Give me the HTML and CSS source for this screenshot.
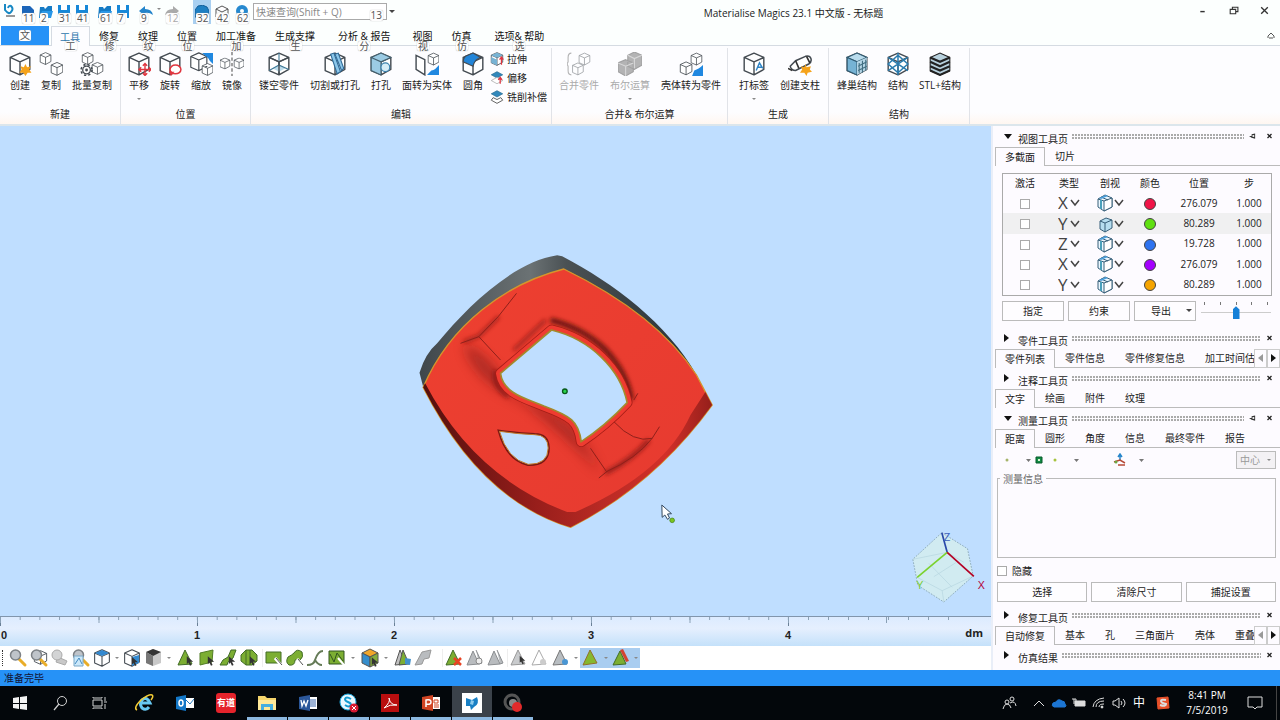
FILE: index.html
```html
<!DOCTYPE html>
<html lang="zh-CN">
<head>
<meta charset="utf-8">
<title>Materialise Magics 23.1 中文版 - 无标题</title>
<link rel="stylesheet" href="styles.css">
</head>
<body>
<svg class="defs" aria-hidden="true">
  <defs>
    <symbol id="cube" viewBox="0 0 22 22"><path d="M11 1 20 5V16L11 21 2 17V5ZM2 5l9 4 9-4M11 9v12" fill="#fff" stroke="#444b52" stroke-width="1.3" stroke-linejoin="round"/></symbol>
    <symbol id="create" viewBox="0 0 22 22"><use href="#cube"/><path d="m16 11 1.500 3 3.500-1-1.500 3 2 3-3.500 0-2 3-2-3-3.500 0 2-3-1-3 3 1z" fill="#f5a31a"/></symbol>
    <symbol id="two" viewBox="0 0 22 22"><use href="#cube" x="0" y="0" width="12" height="12"/><use href="#cube" x="10" y="9" width="13" height="13"/></symbol>
    <symbol id="batch" viewBox="0 0 22 22"><use href="#cube" x="1" y="0" width="12" height="12"/><use href="#cube" x="10" y="9" width="12" height="12"/><circle cx="6" cy="16.500" r="3.500" fill="#fff" stroke="#444b52" stroke-width="1.200"/><circle cx="6" cy="16.500" r="5" fill="none" stroke="#444b52" stroke-width="1.500" stroke-dasharray="2 2"/><circle cx="6" cy="16.500" r="1.300" fill="#444b52"/></symbol>
    <symbol id="move" viewBox="0 0 22 22"><use href="#cube"/><path d="M11 16h11M16.500 11v10M13 14l-2 2 2 2M20 14l2 2-2 2M14.500 12.500l2-2 2 2M14.500 19.500l2 2 2-2" fill="none" stroke="#e0353f" stroke-width="1.300"/></symbol>
    <symbol id="rotate" viewBox="0 0 22 22"><use href="#cube"/><ellipse cx="16" cy="16" rx="5" ry="4" fill="#fff" stroke="#e0353f" stroke-width="1.400"/><path d="m10 18 5 0-3 4z" fill="#e0353f"/></symbol>
    <symbol id="scale" viewBox="0 0 22 22"><use href="#cube" width="18" height="18"/><path d="M12 1h10v10l-3-3c-1-3-4-4-7-7z" fill="#2088e0"/><use href="#cube" x="11" y="10" width="12" height="12"/></symbol>
    <symbol id="mirror" viewBox="0 0 22 22"><use href="#cube" x="-1" y="5" width="11" height="11"/><use href="#cube" x="12" y="5" width="11" height="11"/><path d="M11 0v22" stroke="#555" stroke-dasharray="3 2"/></symbol>
    <symbol id="hollow" viewBox="0 0 22 22"><use href="#cube"/><path d="m5 15 6-3 6 3-6 3z" fill="#bcdceb"/><path d="M11 1v11l9 4M11 12l-9 5" fill="none" stroke="#3d7795"/><path d="M2 5l9 4 9-4M11 9v12" fill="none" stroke="#444b52" stroke-width="1.300"/></symbol>
    <symbol id="cut" viewBox="0 0 22 22"><use href="#cube"/><path d="m7 2 3-1 6 17-3 2z" fill="#8cc7ea" stroke="#2f6996"/><path d="m11 2 3-1 5 14-2 2z" fill="#8cc7ea" stroke="#2f6996"/></symbol>
    <symbol id="punch" viewBox="0 0 22 22"><use href="#cube"/><path d="m2 5 9-4 9 4-9 4zM2 5l9 4v12l-9-4z" fill="#9bcbe4" stroke="#44616f"/><circle cx="15" cy="14" r="4" fill="#d6edf7" stroke="#3981ad"/></symbol>
    <symbol id="face" viewBox="0 0 22 22"><path d="m1 3 8 4v14l-8-5z" fill="#fff" stroke="#444b52" stroke-width="1.300"/><use href="#cube" x="11" y="0" width="12" height="13"/><path d="M22 12v9H11l4-4c3 0 4-2 7-5z" fill="#2088e0"/></symbol>
    <symbol id="fillet" viewBox="0 0 22 22"><use href="#cube"/><path d="m4 4 7-3 7 4c-4 1-6 4-7 8l-9-4c0-3 1-4 2-5z" fill="#2385d8" stroke="#444b52"/></symbol>
    <symbol id="extrude" viewBox="0 0 22 22"><use href="#cube"/><path d="m2 5 9-4 9 4-9 4zM2 8l9 4v9l-9-4z" fill="#77b3d4"/><path d="M18 20V9m-3 3 3-4 3 4" fill="none" stroke="#df3541" stroke-width="2"/></symbol>
    <symbol id="offset" viewBox="0 0 22 22"><path d="m2 6 9-5 9 5-9 5z" fill="#3188bb" stroke="#1e648c"/><path d="m2 15 9-5 9 5-9 5z" fill="#fff" stroke="#999"/><path d="M16 20v-9m-3 3 3-4 3 4" fill="none" stroke="#df3541" stroke-width="2"/></symbol>
    <symbol id="mill" viewBox="0 0 22 22"><path d="m2 6 9-5 9 5-9 5z" fill="#3188bb" stroke="#1e648c"/><path d="m5 12-3 4 9 5 9-5-3-4-6 3z" fill="#fff" stroke="#444" stroke-width="1.300"/></symbol>
    <symbol id="merge" viewBox="0 0 22 22"><path d="M4 1Q1 1 1 5v4l-1 2 1 2v4q0 4 3 4" fill="none" stroke="#777"/><use href="#cube" x="10" y="0" width="12" height="13"/><use href="#cube" x="4" y="9" width="12" height="13"/></symbol>
    <symbol id="bool" viewBox="0 0 22 22"><path d="m15 0 7 3v9l-7 4-6-3V3zM7 7l7 3v8l-7 4-7-4v-8z" fill="#777" stroke="#555"/><path d="m0 10 7 3 7-3M7 13v9M9 3l6 3 7-3M15 6v9" fill="none" stroke="#bbb"/></symbol>
    <symbol id="shell" viewBox="0 0 22 22"><use href="#cube" x="10" y="0" width="12" height="13"/><use href="#cube" x="0" y="8" width="13" height="14"/><path d="M22 12v10H12l2-5c3-1 5-2 8-5z" fill="#2088e0"/></symbol>
    <symbol id="label" viewBox="0 0 22 22"><use href="#cube"/><path d="m13 17 3-7 3 5M14 14h4" fill="none" stroke="#2d83c5" stroke-width="1.300"/></symbol>
    <symbol id="strut" viewBox="0 0 22 22"><path d="m2 13 5-5 9-4q4-1 5 2t-2 5L7 17q-4 0-5-4z" fill="#fff" stroke="#444b52" stroke-width="1.400"/><path d="m0 15 4 2M7 8l3 7M17 4l3 6" stroke="#333" stroke-width="1.500"/><path d="m16 11 1 3 4-1-1 3 2 2-4 1-1 3-2-3-4 0 2-3-1-3 3 1z" fill="#f5a31a"/></symbol>
    <symbol id="honey" viewBox="0 0 22 22"><use href="#cube"/><path d="m2 5 9-4 9 4-9 4z" fill="#b9dced" stroke="#315c73"/><path d="m2 5 9 4v12l-9-4z" fill="#76b3d4" stroke="#315c73"/><path d="m11 9 9-4v11l-9 5z" fill="#b5d6e6"/><path d="M13 10v9m3-11v11m3-12v10M12 13l8-4m-8 8 8-4" stroke="#436f82"/></symbol>
    <symbol id="lattice" viewBox="0 0 22 22"><use href="#cube"/><path d="m2 11 9-8 9 8-9 8zM2 5l18 12M20 5 2 17M11 1v20" fill="none" stroke="#2b7cae" stroke-width="1.400"/></symbol>
    <symbol id="stl" viewBox="0 0 22 22"><path d="m2 5 9-4 9 4v12l-9 4-9-4z" fill="#b8d1dd" stroke="#222"/><path d="m2 5 9 4 9-4M2 9l9 4 9-4M2 13l9 4 9-4M2 17l9 4 9-4" fill="none" stroke="#222" stroke-width="2"/></symbol>
    <symbol id="save" viewBox="0 0 14 14"><path d="M1 0h12v13H1z" fill="#1688d8"/><path d="M4 0h6v5H4zM3 8h8v5H3z" fill="#fff"/></symbol>
    <symbol id="open" viewBox="0 0 14 14"><path d="M1 2h4l1 2 3-3h4v5h-2v7H0z" fill="#147bc5"/><path d="M3 6h11l-2 7H0z" fill="#2897e8"/></symbol>
    <symbol id="mag" viewBox="0 0 20 20"><path d="m11 11 6 6" stroke="#e9ad28" stroke-width="3" stroke-linecap="round"/><circle cx="7.500" cy="7" r="5" fill="#bfc4ca" stroke="#7c8186" stroke-width="1.500"/></symbol>
    <symbol id="cursor" viewBox="0 0 10 12"><path d="m1 0 8 7-4 0 2 4-2 1-2-4-2 2z" fill="#333"/></symbol>
    <symbol id="tri" viewBox="0 0 20 20"><path d="m9 2 7 14-14 1z" fill="#7cae32" stroke="#426c27"/></symbol>
    <symbol id="gtri" viewBox="0 0 20 20"><path d="m8 3 6 13-12 1zM11 2l6 13-3 1" fill="#b9bcbf" stroke="#8b8e91"/></symbol>
    <symbol id="sec" viewBox="0 0 18 18"><path d="m2 5 7-4 7 3v9l-8 4-6-4z" fill="#eaf7ff" stroke="#365e78"/><path d="m8 7 8-3v9l-8 4zM2 5l6 2M5 3l7 3M5 6v9" fill="#fff" stroke="#365e78"/><path d="m3 4 7-3 2 1-7 3z" fill="#4a9edb"/><path d="M5 6v9" stroke="#4aa0bb" stroke-width="2"/></symbol>
    <symbol id="secfill" viewBox="0 0 18 18"><path d="m4 6 6-3 6 2v8l-7 4-5-3z" fill="#b6def0" stroke="#365e78"/><path d="m4 6 5 2 7-3M9 8v9" fill="none" stroke="#365e78"/></symbol>
    <symbol id="chev" viewBox="0 0 10 8"><path d="m1 1 4 5 4-5" fill="none" stroke="#444" stroke-width="1.500"/></symbol>
    <symbol id="pin" viewBox="0 0 8 6"><path d="M0 3h3V1l4-1v6L3 5" fill="#333"/><path d="M4 2h2v2H4z" fill="#fff"/></symbol>
    <symbol id="close" viewBox="0 0 6 6"><path d="m1 1 4 4m0-4L1 5" stroke="#222" stroke-width="1.300"/></symbol>
  </defs>
</svg>

<header class="titlebar">
  <nav class="quick" aria-label="快速访问">
    <span class="qa logo"><svg viewBox="0 0 14 14"><path d="M2 1v6q4 5 6 2Q11 6 8 3 6 2 5 5" fill="none" stroke="#1689c4" stroke-width="2"/><path d="M3 13h9" stroke="#333"/></svg></span>
    <button class="qa"><svg viewBox="0 0 14 14"><path d="M1 1h8l4 4v9H1z" fill="#1b66b9"/></svg><kbd>11</kbd></button>
    <button class="qa"><svg><use href="#open"/></svg><kbd>2</kbd></button>
    <button class="qa"><svg><use href="#save"/></svg><kbd>31</kbd></button>
    <button class="qa"><svg><use href="#save"/></svg><kbd>41</kbd></button>
    <button class="qa gap"><svg><use href="#open"/></svg><kbd>61</kbd></button>
    <button class="qa"><svg><use href="#save"/></svg><kbd>7</kbd></button>
    <button class="qa gap"><svg viewBox="0 0 14 14"><path d="m0 6 6-5v3q7 0 8 6-4-3-8-2v3z" fill="#2384cb"/></svg><kbd>9</kbd></button>
    <i class="caret"></i>
    <button class="qa dim"><svg viewBox="0 0 14 14"><path d="M14 6 8 1v3Q1 4 0 10q4-3 8-2v3z" fill="#aaa"/></svg><kbd>12</kbd></button>
    <button class="qa hot"><svg viewBox="0 0 14 14"><path d="m0 5 3-4q5-2 9 1l2 4v6H0z" fill="#1e7fc2" stroke="#135f9a"/></svg><kbd>32</kbd></button>
    <button class="qa"><svg viewBox="0 0 14 14"><path d="m1 4 6-3 6 3-6 3zM1 4v8m12-8v8" fill="#fff" stroke="#555"/></svg><kbd>42</kbd></button>
    <button class="qa"><svg viewBox="0 0 14 14"><circle cx="7" cy="6" r="4" fill="none" stroke="#2689cf" stroke-width="4"/></svg><kbd>62</kbd></button>
  </nav>
  <div class="search"><input type="text" aria-label="快速查询" placeholder="快速查询(Shift + Q)"><kbd>13</kbd></div>
  <i class="caret dark"></i>
  <h1>Materialise Magics 23.1 中文版 - 无标题</h1>
  <div class="winbtns">
    <button aria-label="最小化"><svg viewBox="0 0 10 10"><path d="M3 6h4" stroke="#333" stroke-width="1.300"/></svg></button>
    <button aria-label="还原"><svg viewBox="0 0 10 10"><path d="M2 4h5v4H2zM4 4V2h5v4H7" fill="none" stroke="#333"/></svg></button>
    <button aria-label="关闭"><svg viewBox="0 0 10 10"><path d="m2 2 6 6m0-6L2 8" stroke="#333" stroke-width="1.200"/></svg></button>
  </div>
</header>

<nav class="tabs" aria-label="功能区">
  <button class="file" aria-label="文件"><kbd>文</kbd></button>
  <button class="on">工具<kbd>工</kbd></button>
  <button>修复<kbd>修</kbd></button>
  <button>纹理<kbd>纹</kbd></button>
  <button>位置<kbd>位</kbd></button>
  <button>加工准备<kbd>加</kbd></button>
  <button>生成支撑<kbd>生</kbd></button>
  <button class="wide">分析 &amp; 报告<kbd>分</kbd></button>
  <button>视图<kbd>视</kbd></button>
  <button>仿真<kbd>仿</kbd></button>
  <button class="wide">选项&amp; 帮助<kbd>选</kbd></button>
  <button class="fold" aria-label="折叠功能区"><svg viewBox="0 0 8 8"><path d="m1 4 3-3 3 3M2 6h4M1 4v2m6-2v2" fill="none" stroke="#555"/></svg></button>
</nav>

<section class="ribbon">
  <div class="group g1"><div class="cmds">
    <button class="cmd"><svg><use href="#create"/></svg>创建<i class="caret"></i></button>
    <button class="cmd"><svg><use href="#two"/></svg>复制</button>
    <button class="cmd"><svg><use href="#batch"/></svg>批量复制</button>
  </div><h2>新建</h2></div>
  <div class="group g2"><div class="cmds">
    <button class="cmd"><svg><use href="#move"/></svg>平移<i class="caret"></i></button>
    <button class="cmd"><svg><use href="#rotate"/></svg>旋转</button>
    <button class="cmd"><svg><use href="#scale"/></svg>缩放</button>
    <button class="cmd"><svg><use href="#mirror"/></svg>镜像</button>
  </div><h2>位置</h2></div>
  <div class="group g3"><div class="cmds">
    <button class="cmd"><svg><use href="#hollow"/></svg>镂空零件</button>
    <button class="cmd"><svg><use href="#cut"/></svg>切割或打孔</button>
    <button class="cmd"><svg><use href="#punch"/></svg>打孔</button>
    <button class="cmd"><svg><use href="#face"/></svg>面转为实体</button>
    <button class="cmd"><svg><use href="#fillet"/></svg>圆角</button>
    <div class="stack">
      <button><svg><use href="#extrude"/></svg>拉伸</button>
      <button><svg><use href="#offset"/></svg>偏移</button>
      <button><svg><use href="#mill"/></svg>铣削补偿</button>
    </div>
  </div><h2>编辑</h2></div>
  <div class="group g4"><div class="cmds">
    <button class="cmd" disabled><svg><use href="#merge"/></svg>合并零件</button>
    <button class="cmd" disabled><svg><use href="#bool"/></svg>布尔运算<i class="caret"></i></button>
    <button class="cmd"><svg><use href="#shell"/></svg>壳体转为零件</button>
  </div><h2>合并&amp; 布尔运算</h2></div>
  <div class="group g5"><div class="cmds">
    <button class="cmd"><svg><use href="#label"/></svg>打标签<i class="caret"></i></button>
    <button class="cmd"><svg><use href="#strut"/></svg>创建支柱</button>
  </div><h2>生成</h2></div>
  <div class="group g6"><div class="cmds">
    <button class="cmd"><svg><use href="#honey"/></svg>蜂巢结构</button>
    <button class="cmd"><svg><use href="#lattice"/></svg>结构</button>
    <button class="cmd"><svg><use href="#stl"/></svg>STL+结构</button>
  </div><h2>结构</h2></div>
</section>

<main class="work">
  <section class="stage">
    <svg class="scene" viewBox="-1200 -342 2970 1470" role="img" aria-label="零件模型">
      <defs>
        <linearGradient id="gr" x1="0" y1="0" x2="1" y2="0"><stop offset="0" stop-color="#40474b"/><stop offset=".4" stop-color="#6b7274"/><stop offset=".53" stop-color="#4a5154"/><stop offset="1" stop-color="#293236"/></linearGradient>
        <linearGradient id="rd" x1="0" y1="0" x2="1" y2="1"><stop offset="0" stop-color="#ee4030"/><stop offset="1" stop-color="#e63a30"/></linearGradient>
        <linearGradient id="edge" x1="0" y1="0" x2="1" y2="0"><stop offset="0" stop-color="#4a0d0b"/><stop offset=".4" stop-color="#981e1b"/><stop offset=".6" stop-color="#b82a24"/><stop offset=".8" stop-color="#d23029"/><stop offset="1" stop-color="#7c1815"/></linearGradient>
        <filter id="soft" x="-30%" y="-30%" width="160%" height="160%"><feGaussianBlur stdDeviation="18"/></filter>
        <filter id="soft2" x="-30%" y="-30%" width="160%" height="160%"><feGaussianBlur stdDeviation="6"/></filter>
        <clipPath id="body"><path id="bodyshape" d="M490 87C650 165 800 270 888 405L935 495Q760 735 510 862 240 780 68 442C150 250 320 130 490 87Z"/></clipPath>
      </defs>
      <path d="M68 440 57 398Q75 340 110 310C200 200 340 65 470 46L485 49C640 130 800 250 888 405L600 500Z" fill="url(#gr)"/>
      <path d="M490 87C650 165 800 270 888 405L935 495Q760 735 510 862 240 780 68 442C150 250 320 130 490 87Z" fill="url(#rd)" stroke="#d6962b" stroke-width="4"/>
      <g clip-path="url(#body)">
        <path d="M74 430Q220 710 500 816L525 816Q790 700 870 525L915 455 990 455V900H20V430Z" fill="url(#edge)"/>
        <path d="M190 310Q280 350 330 460 450 500 530 570L600 700Q500 590 370 490 210 420 190 310Z" fill="#731914" opacity=".5" filter="url(#soft)"/>
        <path d="M450 240Q550 265 615 330 680 400 692 480" fill="none" stroke="#66130f" stroke-width="16" filter="url(#soft2)"/>
        <path d="M615 700Q700 655 745 600M285 390q-10 50 40 80" fill="none" stroke="#7b1713" stroke-width="12" filter="url(#soft2)" opacity=".8"/>
        <path d="M190 306 235 288 295 230M340 330 435 240" fill="none" stroke="#7b1713" stroke-width="8" filter="url(#soft2)" opacity=".8"/>
        <path d="m348 160-55 70-58 60 65 70M180 310l55-20M640 545q60 65 115 50l22-35M570 625l48 70q90-40 137-100M700 480l12-20M595 714l25-20" fill="none" stroke="#8f211b" stroke-width="3"/>
      </g>
      <path d="m453 270-153 130c8 60 75 75 130 98 80 30 105 45 112 107q70-45 138-117c-20-100-110-190-227-218Z" fill="#bddfff" stroke="#a51d17" stroke-width="32" stroke-linejoin="round"/>
      <path d="m453 270-153 130c8 60 75 75 130 98 80 30 105 45 112 107q70-45 138-117c-20-100-110-190-227-218Z" fill="#bddfff" stroke="#ef3b30" stroke-width="27" stroke-linejoin="round"/>
      <path d="m453 270-153 130c8 60 75 75 130 98 80 30 105 45 112 107q70-45 138-117c-20-100-110-190-227-218Z" fill="#bfdeff" stroke="#a28a2c" stroke-width="5"/>
      <path d="M297 574q55 8 105 10 40 0 41 40 0 50-60 49-63-15-86-99Z" fill="#bfdeff" stroke="#7b1812" stroke-width="10"/>
      <path d="M297 574q55 8 105 10 40 0 41 40 0 50-60 49-63-15-86-99Z" fill="#bfdeff" stroke="#c47a27" stroke-width="3"/>
      <circle cx="493" cy="454" r="7" fill="#29d34c" stroke="#075a19" stroke-width="4"/>
      <path d="m784 795 1 37 8-7 8 13 6-4-6-12 12-1Z" fill="#fff" stroke="#34495f" stroke-width="3"/>
      <circle cx="815" cy="841" r="7" fill="#7ac51f" stroke="#407d13" stroke-width="2"/>
      <g transform="translate(1500 840)">
        <path d="m124 38 77 48 17 82-88 78-78-50-15-78Z" fill="#d1ebf1" stroke="#90aebd" stroke-width="3" stroke-dasharray="5 4"/>
        <path d="m140 97-103 21M140 97l50 30M50 172l75 40 93-44M125 212l5 34M85 130l70 72M100 170l66-42" fill="none" stroke="#b5d5df" stroke-width="2"/>
        <path d="m140 97-16-59" stroke="#2847a9" stroke-width="5"/><path d="m140 97-90 75" stroke="#7bd22e" stroke-width="5"/><path d="m140 97 80 72" stroke="#b40024" stroke-width="5"/>
        <text x="130" y="62" class="ax z">Z</text><text x="47" y="206" class="ax y">Y</text><text x="232" y="206" class="ax x">X</text>
      </g>
    </svg>
    <div class="ruler"><span>0</span><span>1</span><span>2</span><span>3</span><span>4</span><b>dm</b></div>
    <div class="tools">
      <i class="grip"></i>
      <button><svg><use href="#mag"/></svg></button>
      <button><svg viewBox="0 0 20 20"><use href="#cube" x="4" y="2" width="15" height="15"/><use href="#mag"/></svg></button>
      <button><svg viewBox="0 0 20 20"><path d="m8 9 9 4-2 4-9-3z" fill="#c8c8c8" stroke="#aaa"/><circle cx="7" cy="7" r="5" fill="#d3d4d5" stroke="#aaa"/></svg></button>
      <button><svg viewBox="0 0 20 20"><use href="#mag"/><path d="M3 8h9v10H3z" fill="#cbe8fa" stroke="#7aa8c7"/><path d="m4 16 4-6 3 6" fill="none" stroke="#438ac1"/></svg></button>
      <button><svg viewBox="0 0 20 20"><use href="#cube" x="1" y="1" width="18" height="18"/><path d="m3 5 7-3 7 3-7 3z" fill="#3389d0"/></svg></button>
      <i class="caret w8"></i>
      <button><svg viewBox="0 0 20 20"><use href="#cube" x="1" y="1" width="18" height="18"/><path d="m10 9 7-2v8l-7 3z" fill="#338bd3"/><use href="#cursor" x="9" y="9" width="8" height="9"/></svg></button>
      <button><svg viewBox="0 0 20 20"><path d="m10 1 8 3v11l-8 3-7-3V4z" fill="#c9c9c9"/><path d="m3 4 7-3 8 3-8 4z" fill="#333"/><path d="m3 4 7 4v10l-7-3z" fill="#777"/></svg></button>
      <i class="caret w12"></i>
      <button><svg viewBox="0 0 20 20"><use href="#tri"/><use href="#cursor" x="10" y="8" width="8" height="10"/></svg></button>
      <button><svg viewBox="0 0 20 20"><path d="m3 5 13-3-1 12-12 3z" fill="#7cae32" stroke="#527d25"/><use href="#cursor" x="10" y="8" width="8" height="10"/></svg></button>
      <button><svg viewBox="0 0 20 20"><path d="m2 17 3-5 5-3 3-7h5l-3 8-5 4-1 3z" fill="#7cae32" stroke="#426c27"/><use href="#cursor" x="10" y="8" width="8" height="10"/></svg></button>
      <button><svg viewBox="0 0 20 20"><path d="m7 2 6 0 5 5v6l-5 4H7l-5-4V7z" fill="#7cae32" stroke="#426c27"/><path d="M7 2v15m4-15v15" stroke="#426c27"/><use href="#cursor" x="10" y="8" width="8" height="10"/></svg></button>
      <i class="sep w4"></i>
      <button><svg viewBox="0 0 20 20"><path d="M2 4h15v11H2z" fill="#7cae32" stroke="#426c27"/><path d="m11 10 6 7" stroke="#fff" stroke-width="3"/><path d="m12 10 6 7" stroke="#555"/></svg></button>
      <button><svg viewBox="0 0 20 20"><path d="M9 5q3-5 8-1 2 5-2 8-3-1-5 0 0 6-6 5-4-3-1-8 4-2 6-4z" fill="#7cae32" stroke="#426c27"/><path d="m12 11 6 6" stroke="#fff" stroke-width="3"/><path d="m13 11 5 6" stroke="#555"/></svg></button>
      <button><svg viewBox="0 0 20 20"><path d="M1 17q7 0 8-5 3-9 8-9M9 12q3 5 7 5" fill="none" stroke="#657b57" stroke-width="2"/></svg></button>
      <button><svg viewBox="0 0 20 20"><path d="M2 3h15v13H2z" fill="#7cae32" stroke="#31541f"/><path d="m3 6 4 8 3-9 6 8" fill="none" stroke="#31541f"/><path d="m11 10 6 7" stroke="#fff" stroke-width="2"/></svg></button>
      <i class="caret w12"></i>
      <button><svg viewBox="0 0 20 20"><path d="m10 1 8 4-8 4-8-4z" fill="#f1a62a" stroke="#555"/><path d="m2 5 8 4v10l-8-4z" fill="#358dcc" stroke="#555"/><path d="m10 9 8-4v10l-8 4z" fill="#83ad3d" stroke="#555"/><use href="#cursor" x="11" y="9" width="8" height="10"/></svg></button>
      <i class="caret w12"></i>
      <button><svg viewBox="0 0 20 20"><path d="m7 2 6 14-11 1z" fill="#c0c0c0" stroke="#555"/><path d="m10 2 6 14-10 1z" fill="#7cae32" stroke="#555"/><path d="m12 10 6 1-1 6-5-1z" fill="#4291cb"/></svg></button>
      <button><svg viewBox="0 0 20 20"><path d="m8 4 9-2-2 8-5 1-2 5-7 1z" fill="#b9bcbf" stroke="#999"/></svg></button>
      <i class="sep w9"></i>
      <button><svg viewBox="0 0 20 20"><use href="#tri"/><path d="m10 10 7 7m0-7-7 7" stroke="#e84324" stroke-width="2.500"/></svg></button>
      <button><svg viewBox="0 0 20 20"><use href="#gtri"/><circle cx="14" cy="13" r="3" fill="#eee" stroke="#888"/></svg></button>
      <button><svg><use href="#gtri"/></svg></button>
      <i class="sep"></i>
      <button><svg viewBox="0 0 20 20"><path d="m9 2 7 14-14 1z" fill="#c9cbcd" stroke="#999"/><use href="#cursor" x="10" y="7" width="7" height="10"/></svg></button>
      <button><svg viewBox="0 0 20 20"><path d="m9 2 7 14-14 1z" fill="#fff" stroke="#aaa"/><circle cx="13" cy="14" r="3" fill="#ccc"/></svg></button>
      <button><svg viewBox="0 0 20 20"><path d="m9 2 7 14-14 1z" fill="#b8bdc1" stroke="#777"/><circle cx="14" cy="14" r="3" fill="#4a96d3"/></svg></button>
      <i class="caret w8"></i>
      <button class="hot"><svg viewBox="0 0 20 20"><path d="m9 2 7 13-14 2z" fill="#86b82f" stroke="#946f28"/></svg></button>
      <i class="caret hot w8"></i>
      <button class="hot"><svg viewBox="0 0 20 20"><path d="m9 3 6 13-13 1z" fill="#7cae32" stroke="#426c27"/><path d="m9 2 3-1 6 12-3 1z" fill="#d34432"/></svg></button>
      <i class="caret hot w8"></i>
    </div>
  </section>

  <aside class="side">
    <section>
      <header class="ph open"><i class="disc"></i><h3>视图工具页</h3><i class="dots"></i><button aria-label="固定"><svg><use href="#pin"/></svg></button><button aria-label="关闭"><svg><use href="#close"/></svg></button></header>
      <div class="pt"><button class="on">多截面</button><button>切片</button></div>
      <div class="view">
        <table>
          <colgroup><col class="c1"><col class="c1"><col class="c2"><col class="c3"><col class="c4"><col class="c1"></colgroup>
          <thead><tr><th>激活</th><th>类型</th><th>剖视</th><th>颜色</th><th>位置</th><th>步</th></tr></thead>
          <tbody>
            <tr><td><input type="checkbox" aria-label="激活 1"></td><td><span class="pick"><select aria-label="类型 1"><option>X</option></select><svg><use href="#chev"/></svg></span></td><td><button class="pick" aria-label="剖视 1"><svg class="sv"><use href="#sec"/></svg><svg><use href="#chev"/></svg></button></td><td><i class="dot red"></i></td><td>276.079</td><td>1.000</td></tr>
            <tr class="sel"><td><input type="checkbox" aria-label="激活 2"></td><td><span class="pick"><select aria-label="类型 2"><option>Y</option></select><svg><use href="#chev"/></svg></span></td><td><button class="pick" aria-label="剖视 2"><svg class="sv"><use href="#secfill"/></svg><svg><use href="#chev"/></svg></button></td><td><i class="dot green"></i></td><td>80.289</td><td>1.000</td></tr>
            <tr><td><input type="checkbox" aria-label="激活 3"></td><td><span class="pick"><select aria-label="类型 3"><option>Z</option></select><svg><use href="#chev"/></svg></span></td><td><button class="pick" aria-label="剖视 3"><svg class="sv"><use href="#sec"/></svg><svg><use href="#chev"/></svg></button></td><td><i class="dot blue"></i></td><td>19.728</td><td>1.000</td></tr>
            <tr><td><input type="checkbox" aria-label="激活 4"></td><td><span class="pick"><select aria-label="类型 4"><option>X</option></select><svg><use href="#chev"/></svg></span></td><td><button class="pick" aria-label="剖视 4"><svg class="sv"><use href="#sec"/></svg><svg><use href="#chev"/></svg></button></td><td><i class="dot purple"></i></td><td>276.079</td><td>1.000</td></tr>
            <tr><td><input type="checkbox" aria-label="激活 5"></td><td><span class="pick"><select aria-label="类型 5"><option>Y</option></select><svg><use href="#chev"/></svg></span></td><td><button class="pick" aria-label="剖视 5"><svg class="sv"><use href="#sec"/></svg><svg><use href="#chev"/></svg></button></td><td><i class="dot orange"></i></td><td>80.289</td><td>1.000</td></tr>
          </tbody>
        </table>
        <div class="row acts"><button class="btn">指定</button><button class="btn">约束</button><button class="btn drop"><span>导出</span><i class="caret dark"></i></button>
          <div class="slide"><div class="ticks"><i></i><i></i><i></i><i></i><i></i></div><input type="range" min="0" max="4" value="2" aria-label="步长"></div></div>
      </div>
    </section>
    <section>
      <header class="ph"><i class="disc"></i><h3>零件工具页</h3><i class="dots"></i><button aria-label="关闭"><svg><use href="#close"/></svg></button></header>
      <div class="pt"><button class="on">零件列表</button><button>零件信息</button><button>零件修复信息</button><button>加工时间估算</button><span class="arrows"><button class="off" aria-label="上一页"></button><button aria-label="下一页"></button></span></div>
    </section>
    <section>
      <header class="ph"><i class="disc"></i><h3>注释工具页</h3><i class="dots"></i><button aria-label="关闭"><svg><use href="#close"/></svg></button></header>
      <div class="pt"><button class="on">文字</button><button>绘画</button><button>附件</button><button>纹理</button></div>
    </section>
    <section>
      <header class="ph open"><i class="disc"></i><h3>测量工具页</h3><i class="dots"></i><button aria-label="固定"><svg><use href="#pin"/></svg></button><button aria-label="关闭"><svg><use href="#close"/></svg></button></header>
      <div class="pt"><button class="on">距离</button><button>圆形</button><button>角度</button><button>信息</button><button>最终零件</button><button>报告</button></div>
      <div class="meas">
        <div class="row mt">
          <svg class="mi" viewBox="0 0 144 14"><g fill="#777"><circle cx="5" cy="7" r="1.500" fill="#a6b56b"/><path d="M24 6h5l-2.500 3zM72 6h5l-2.500 3zM137 6h5l-2.500 3z"/></g><path d="M34 4h6v6h-6z" fill="#128c45" stroke="#075b2a"/><path d="M36 6h2v2h-2z" fill="#d8f5d0"/><circle cx="53" cy="7" r="1.500" fill="#a6c33f"/><path d="M118 7V2m-2 2 2-3 2 3" fill="none" stroke="#2686cb" stroke-width="1.500"/><path d="m112 9 6-2 5 3M116 12h7" fill="none" stroke="#b64b37" stroke-width="1.500"/><circle cx="114" cy="9" r="1.500" fill="#6ba842"/></svg>
          <span class="snap"><select aria-label="捕捉点" disabled><option>中心</option></select><i class="caret"></i></span>
        </div>
        <fieldset><legend>测量信息</legend></fieldset>
        <label class="hide"><input type="checkbox">隐藏</label>
        <div class="row btns"><button class="btn">选择</button><button class="btn">清除尺寸</button><button class="btn">捕捉设置</button></div>
      </div>
    </section>
    <section>
      <header class="ph"><i class="disc"></i><h3>修复工具页</h3><i class="dots"></i><button aria-label="关闭"><svg><use href="#close"/></svg></button></header>
      <div class="pt"><button class="on">自动修复</button><button>基本</button><button>孔</button><button>三角面片</button><button>壳体</button><button>重叠</button><span class="arrows"><button class="off" aria-label="上一页"></button><button aria-label="下一页"></button></span></div>
    </section>
    <section>
      <header class="ph"><i class="disc"></i><h3>仿真结果</h3><i class="dots"></i><button aria-label="关闭"><svg><use href="#close"/></svg></button></header>
    </section>
  </aside>
</main>

<div class="status">准备完毕</div>

<footer class="taskbar">
  <button class="sys" aria-label="开始"><svg viewBox="0 0 20 20"><path d="m3 5 6-1v6H3zM10 4l7-1v7h-7zM3 11h6v5l-6-1zM10 11h7v6l-7-1z" fill="#fff"/></svg></button>
  <button class="sys" aria-label="搜索"><svg viewBox="0 0 20 20"><circle cx="12" cy="8" r="4.500" fill="none" stroke="#ddd"/><path d="m9 11-5 6" stroke="#ddd" stroke-width="1.200"/></svg></button>
  <button class="sys" aria-label="任务视图"><svg viewBox="0 0 20 20"><path d="M3 7h9v6H3zM3 4v1h9V4M3 16v-1h9v1M15 4v4m0 3v5" fill="none" stroke="#ddd"/><path d="M14 9h3" stroke="#ddd"/></svg></button>
  <div class="apps">
    <button aria-label="Internet Explorer"><svg viewBox="0 0 20 20"><path d="M15 14q-3 4-7 1-3-4 0-8 5-4 8 3H7" fill="none" stroke="#68c9f4" stroke-width="3"/><path d="M3 17Q-1 15 7 7q8-6 11-5 2 1-1 5" fill="none" stroke="#f4cc35" stroke-width="1.500"/></svg></button>
    <button aria-label="Outlook"><svg viewBox="0 0 20 20"><path d="M10 5h9v10h-9z" fill="#fff"/><path d="m10 6 5 5 4-5" fill="none" stroke="#2277bd"/><path d="m1 4 10-2v16L1 16z" fill="#1377c7"/><ellipse cx="6" cy="10" rx="2" ry="3" fill="none" stroke="#fff" stroke-width="1.500"/></svg></button>
    <button aria-label="有道"><span class="yd">有道</span></button>
    <button class="run" aria-label="文件资源管理器"><svg viewBox="0 0 20 20"><path d="M1 3h7l2 2h9v12H1z" fill="#f5d56d"/><path d="M1 7h18v10H1z" fill="#ffe99a"/><path d="M4 17v-6h12v6h-3v-3H7v3z" fill="#45aee0"/></svg></button>
    <button class="run" aria-label="Word"><svg viewBox="0 0 20 20"><path d="M9 4h10v12H9z" fill="#fff"/><path d="M12 7h6m-6 2h6m-6 2h6m-6 2h6" stroke="#3a66ab"/><path d="m1 4 11-2v16L1 16z" fill="#2b579a"/><path d="m3 7 1 6 2-5 2 5 2-6" fill="none" stroke="#fff" stroke-width="1.300"/></svg></button>
    <button class="run" aria-label="Skype"><svg viewBox="0 0 20 20"><circle cx="9" cy="9" r="8" fill="#eaf8ff" stroke="#19a8dd"/><path d="M12 6q-5-3-6 0 0 2 3 3t3 3q-2 3-6 0" fill="none" stroke="#139bd0" stroke-width="2"/><circle cx="15" cy="15" r="4.500" fill="#d71931"/><path d="m13 13 4 4m0-4-4 4" stroke="#fff"/></svg></button>
    <button class="run" aria-label="Acrobat"><svg viewBox="0 0 20 20"><path d="M1 1h18v18H1z" fill="#b90e0f"/><path d="M4 15q7-6 5-10 1 7 8 7-7-1-13 3z" fill="none" stroke="#fff"/></svg></button>
    <button class="run" aria-label="PowerPoint"><svg viewBox="0 0 20 20"><path d="M9 4h10v12H9z" fill="#fff"/><path d="M13 7h4v3h-4zm0 5h5m-5 2h5" fill="none" stroke="#d04423"/><path d="m1 4 11-2v16L1 16z" fill="#d04423"/><path d="M5 14V7q5-1 5 2t-5 2" fill="none" stroke="#fff" stroke-width="1.500"/></svg></button>
    <button class="run act" aria-label="Magics"><svg viewBox="0 0 20 20"><path d="M0 0h20v20H0z" fill="#fff"/><path d="m4 5 6 2 5-3q3 7-3 10l-3 3-1-4-4 0z" fill="#187fc4"/><path d="m9 7 3 1-1 4-3-1z" fill="#8dcbed"/></svg></button>
    <button class="run" aria-label="录屏"><svg viewBox="0 0 20 20"><circle cx="9" cy="9" r="7" fill="none" stroke="#555" stroke-width="3"/><circle cx="10" cy="10" r="4" fill="#888"/><circle cx="14" cy="14" r="5" fill="#e12a2a"/></svg></button>
  </div>
  <div class="tray">
    <svg viewBox="0 0 16 16"><circle cx="6" cy="7" r="2"/><circle cx="11" cy="4" r="2"/><path d="M2 14q1-5 4-5t4 4M9 8q5-3 6 3"/></svg>
    <svg class="first" viewBox="0 0 16 16"><path d="m3 11 5-5 5 5"/></svg>
    <svg viewBox="0 0 16 16"><path d="M3 12q-3-1-1-4l3-1q2-4 6-1 3 0 3 3 2 2 0 3z" fill="#1c75d2" stroke="#1c75d2"/></svg>
    <svg viewBox="0 0 16 16"><path d="M4 6h10v5H4z" fill="#ddd"/><path d="M3 9V4m-2 0h4v2"/></svg>
    <svg viewBox="0 0 16 16"><path d="M2 12Q3 4 13 3M5 12q0-6 8-6M8 12q0-3 5-3"/><circle cx="11" cy="12" r="1" fill="#fff"/></svg>
    <svg viewBox="0 0 16 16"><path d="M2 6h2l4-3v10L4 10H2zM10 6q2 2 0 4m2-6q4 4 0 8"/></svg>
    <span class="ime">中</span>
    <svg class="sogou" viewBox="0 0 16 16"><path d="m2 3 11-1 1 11-11 1z" fill="#e85029" stroke="#e85029"/><path d="M11 5Q6 4 6 6t5 3q0 3-6 1" stroke-width="2"/></svg>
    <time>8:41 PM<br>7/5/2019</time>
    <button aria-label="通知"><svg viewBox="0 0 16 16"><path d="M1 2h14v10h-5l-2 2-2-2H1z"/></svg></button>
  </div>
</footer>
</body>
</html>
```
FILE: styles.css
```css
* { box-sizing: border-box; }
html, body { margin: 0; height: 100%; }
body {
  display: flex; flex-direction: column; min-height: 100vh; overflow: hidden;
  font: 10px/12px "Open Sans", "Noto Sans CJK SC", sans-serif; color: #222; background: #fdfdff;
}
button, input, select { font: inherit; color: inherit; }
button { border: 0; background: none; padding: 0; white-space: nowrap; }
h1, h2, h3 { margin: 0; font: inherit; }
svg { display: block; flex: none; }
.defs { position: absolute; width: 0; height: 0; }
kbd { font: inherit; color: #555; background: #fdfdfd; border-radius: 2px; box-shadow: 0 0 1px #999; line-height: 11px; padding: 0 1px; position: absolute; }
.caret { display: flex; align-items: center; justify-content: center; flex: none; }
.caret::after { content: ""; border: 2px solid transparent; border-top-color: #888; border-bottom: 0; }
.caret.dark::after { border-width: 3px 3px 0; border-top-color: #444; }
.w8 { width: 9px; }
.w12 { width: 12px; }

.titlebar { display: flex; height: 26px; flex: none; background: #fcfffe; align-items: flex-start; }
.quick { display: flex; padding-left: 1px; width: 253px; flex: none; }
.qa { position: relative; width: 18px; height: 24px; padding: 3px 2px; flex: none; }
.qa svg { width: 14px; height: 14px; }
.qa kbd { top: 13px; left: 3px; }
.qa.gap { margin-left: 5px; }
.quick .caret { width: 8px; height: 18px; }
.qa.dim { color: #aaa; }
.qa.dim kbd { color: #aaa; }
.qa.hot { background: #a9d0f1; margin-left: 12px; }
.qa.hot ~ .qa { margin-left: 2px; }
.search { position: relative; width: 134px; height: 17px; margin-top: 3px; }
.search input { display: block; width: 100%; height: 100%; border: 1px solid #aaa; padding: 0 2px; background: #fff; font-size: 10px; }
.search input::placeholder { color: #888; opacity: 1; }
.search kbd { right: 4px; top: 7px; }
.titlebar > .caret { width: 9px; height: 22px; }
.titlebar h1 { flex: 1; padding: 7px 0 0 4px; text-align: center; }
.winbtns { display: flex; padding-top: 5px; }
.winbtns button { width: 31px; display: flex; justify-content: center; }
.winbtns svg { width: 11px; height: 11px; }

.tabs { display: flex; height: 20px; flex: none; background: #fcfffe; border-bottom: 1px solid #d5dbe2; }
.tabs button { position: relative; padding: 0 10px 0 9px; height: 19px; color: #111; }
.tabs kbd { top: 15px; left: 50%; margin-left: -6px; line-height: 10px; }
.tabs .wide { padding: 0 13px; }
.tabs .file { width: 48px; margin: 0 2px 0 1px; background: #2692f7; }
.tabs .file kbd { top: 4px; line-height: 11px; }
.tabs .on { color: #2b75ab; height: 20px; background: #fdfdff; border: 1px solid #d5dbe2; border-bottom: 0; padding: 0 9px 0 8px; }
.tabs .on kbd { top: 14px; }
.tabs .fold { margin-left: auto; padding: 0 5px; }
.fold svg { width: 8px; height: 8px; }

.ribbon { display: flex; height: 80px; flex: none; border-bottom: 2px solid #dce6ec; background: linear-gradient(#fdfdff 85%, #fff7f1); }
.group { display: flex; flex-direction: column; border-right: 1px solid #e1e3e8; margin-top: 2px; }
.group h2 { text-align: center; height: 16px; padding-top: 1px; }
.cmds { display: flex; gap: 3px; height: 59px; flex: none; padding: 0 4px; }
.g1 { min-width: 120px; }
.g1 .cmds { padding-left: 6px; }
.g2 { min-width: 129px; }
.g3 { min-width: 301px; }
.g4 { min-width: 174px; }
.g4 .cmds { padding: 0 2px 0 3px; }
.g5 { min-width: 100px; }
.g5 .cmds { padding-left: 7px; }
.g6 { min-width: 139px; }
.cmd { display: flex; flex-direction: column; align-items: center; padding: 4px 4px 0; line-height: 12px; }
.cmd svg { width: 24px; height: 24px; margin: 0 -2px 3px; }
.cmd .caret { height: 16px; }
.cmd:disabled { color: #aaa; }
.cmd:disabled svg { opacity: .55; }
.stack { display: flex; flex-direction: column; gap: 5px; padding-top: 4px; }
.stack button { display: flex; align-items: center; gap: 3px; height: 14px; }
.stack svg { width: 14px; height: 14px; }

.work { display: flex; flex: 1; min-height: 0; }
.stage { flex: 1; min-width: 0; display: flex; flex-direction: column; background: #bfdeff; }
.scene { flex: 1; min-height: 0; width: 100%; }
.ax { font: 32px "Liberation Sans", sans-serif; }
.ax.x { fill: #b50038; }
.ax.y { fill: #75cc38; }
.ax.z { fill: #3e61ba; }
.ruler { display: flex; height: 30px; flex: none; border-top: 1px solid #8195ac; background: linear-gradient(#dcebff, #e5effe 40%, #c4e1fa); overflow: hidden; position: relative; }
.ruler span { width: 197px; flex: none; padding-top: 11px; text-indent: -3px; font: bold 11px/14px "Liberation Sans", sans-serif;
  background-image: linear-gradient(to right, #8aa0b5 1px, transparent 1px), linear-gradient(to right, #8aa0b5 1px, transparent 1px), linear-gradient(to right, #6a8096 1px, transparent 1px);
  background-size: 10% 3px, 50% 6px, 100% 9px; background-repeat: repeat-x; }
.ruler span:first-child { text-indent: 1px; }
.ruler span:last-of-type { flex: 1; background-size: 20px 3px, 98px 6px, 1000px 9px; }
.ruler b { padding: 9px 8px 0 0; font-size: 11px; line-height: 14px; }
.tools { display: flex; align-items: center; height: 24px; flex: none; background: #fff; padding-left: 2px; }
.tools button { width: 21px; height: 20px; display: flex; justify-content: center; align-items: center; flex: none; }
.tools button svg { width: 20px; height: 20px; }
.tools .hot { background: #a9cdf0; height: 20px; }
.grip { width: 1px; height: 16px; border-left: 1px dotted #333; margin-right: 4px; }
.sep { width: 2px; height: 18px; border-right: 1px solid #eee; }
.w4 { width: 4px; }
.w9 { width: 9px; }

.side { width: 289px; flex: none; background: #fdfbff; border-left: 2px solid #e9eef8; overflow: hidden; }
.ph { display: flex; height: 21px; padding: 6px 7px 0 11px; }
.disc { width: 14px; height: 10px; flex: none; }
.disc::before { content: ""; display: block; width: 0; border: 4px solid transparent; border-left: 5px solid #111; border-right: 0; }
.open .disc::before { border: 4px solid transparent; border-top: 5px solid #111; border-bottom: 0; margin-top: 2px; }
.ph h3 { line-height: 14px; }
.dots { flex: 1; height: 5px; margin: 2px 5px 0 4px; background: radial-gradient(circle at 1px 1px, #aaa 1px, transparent 1px) 0 0 / 3px 3px; }
.ph button { width: 7px; height: 6px; margin-top: 1px; }
.ph button + button { margin-left: 10px; }
.ph svg { width: 7px; height: 6px; }
.pt { position: relative; display: flex; height: 19px; margin-left: 2px; overflow: hidden; }
.pt > button { padding: 0 10px; border-bottom: 1px solid #bbb; flex: none; }
.pt::after { content: ""; flex: 1; border-bottom: 1px solid #bbb; }
.pt > .on { border: 1px solid #bbb; border-bottom: 0; padding: 0 9px; }
.arrows { position: absolute; right: 0; top: 0; bottom: 0; display: flex; background: #fdfbff; }
.arrows button { width: 13px; border: 1px solid #ccc; display: flex; align-items: center; justify-content: center; }
.arrows button::before { content: ""; border: 4px solid transparent; border-left: 5px solid #111; border-right: 0; }
.arrows .off::before { border: 4px solid transparent; border-right: 5px solid #999; border-left: 0; }

.view { padding: 7px 8px 7px 9px; }
table { width: 100%; border: 1px solid #aaa; border-collapse: separate; border-spacing: 0; table-layout: fixed; }
.c1 { width: 44px; }
.c2 { width: 38px; }
.c3 { width: 42px; }
.c4 { width: 56px; }
th, td { height: 20px; padding: 0 0 1px; font-weight: 400; text-align: center; vertical-align: middle; line-height: 18px; }
th { height: 19px; }
.sel td { background: #f0f0f1; }
input[type=checkbox] { appearance: none; width: 10px; height: 10px; border: 1px solid #aaa; margin: 0; background: #fff; display: inline-block; vertical-align: middle; }
.pick { display: inline-flex; align-items: center; vertical-align: middle; height: 18px; }
.pick svg { width: 10px; height: 8px; }
.pick .sv { width: 18px; height: 18px; }
.pick select { appearance: none; border: 0; background: none; padding: 0; width: 12px; font-size: 17px; line-height: 18px; height: 18px; color: #444; }
.dot { display: inline-block; width: 12px; height: 12px; border-radius: 50%; border: 1px solid #444; vertical-align: middle; }
.red { background: #f01448; }
.green { background: #5fe010; }
.blue { background: #2e73f0; }
.purple { background: #a500ff; }
.orange { background: #f5a400; }
.row { display: flex; }
.btn { flex: 1; height: 20px; border: 1px solid #bbb; background: #fefdff; }
.acts { gap: 4px; margin-top: 5px; }
.drop { display: flex; align-items: center; }
.drop span { flex: 1; padding-left: 4px; }
.drop .caret { width: 12px; }
.slide { width: 72px; padding: 0 1px; }
.ticks { display: flex; justify-content: space-between; padding: 1px 3px; height: 5px; }
.ticks i { width: 1px; height: 3px; background: #777; }
.slide input { appearance: none; display: block; width: 100%; height: 14px; margin: 0; background: linear-gradient(#ccc, #ccc) 0 6px / 100% 1px no-repeat; }
.slide input::-webkit-slider-thumb { appearance: none; width: 7px; height: 13px; background: #1680d8; clip-path: polygon(50% 0, 100% 25%, 100% 100%, 0 100%, 0 25%); }

.meas { padding: 0 4px 3px; }
.mt { height: 24px; align-items: center; padding-left: 5px; }
.mi { width: 144px; height: 14px; }
.snap { display: flex; margin-left: auto; width: 40px; height: 18px; border: 1px solid #bbb; background: #f3f1f4; }
.snap select { appearance: none; flex: 1; min-width: 0; border: 0; background: none; color: #999; opacity: 1; padding: 0 0 0 3px; }
.snap .caret { width: 12px; }
fieldset { height: 86px; margin: 0; padding: 0 2px; border: 1px solid #bbb; color: #666; }
legend { padding: 0 3px; line-height: 14px; }
.hide { display: flex; align-items: center; gap: 5px; height: 24px; padding-top: 2px; }
.btns { gap: 4px; }

.status { height: 16px; flex: none; padding-left: 4px; line-height: 16px; background: #2692f7; color: #113; }
.taskbar { display: flex; height: 34px; flex: none; background: #03070b; color: #fff; }
.taskbar button { display: flex; align-items: center; justify-content: center; }
.taskbar button svg { width: 20px; height: 20px; }
.sys { width: 40px; }
.sys svg { opacity: .95; }
.apps { display: flex; gap: 1px; margin-left: 4px; }
.apps button { width: 40px; border-bottom: 3px solid transparent; padding-top: 3px; }
.apps .run { border-image: linear-gradient(to right, transparent 8%, #8cb8e0 8%, #8cb8e0 92%, transparent 92%) 3; border-width: 0 0 3px; border-style: solid; }
.apps .act { background: #3b424a; }
.yd { width: 20px; height: 20px; border-radius: 3px; background: #e5232b; font-weight: 700; font-size: 9px; line-height: 20px; }
.tray { display: flex; align-items: center; margin-left: auto; padding-right: 3px; gap: 4px; }
.tray svg { width: 16px; height: 16px; fill: none; stroke: #ddd; }
.tray .first { margin-left: 10px; }
.tray .sogou { margin-left: 4px; }
.tray .ime { width: 16px; font-size: 12px; text-align: center; }
.tray time { width: 64px; text-align: center; line-height: 15px; }
.tray button { width: 34px; height: 34px; padding-right: 10px; border-right: 1px solid #444; }
.tray button svg { width: 16px; height: 16px; }
```
